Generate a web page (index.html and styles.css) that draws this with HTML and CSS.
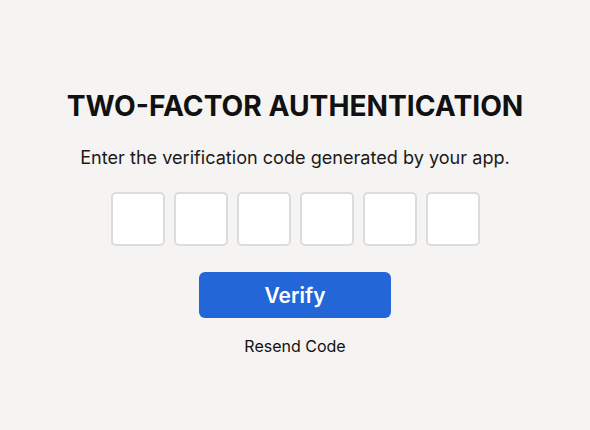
FILE: index.html
```html
<!DOCTYPE html>
<html lang="en">
<head>
    <meta charset="UTF-8">
    <meta name="viewport" content="width=device-width, initial-scale=1.0">
    <title>Two-Factor Authentication</title>
    <link rel="stylesheet" href="styles.css">
</head>
<body>
    <div id="auth-screen">
        <h1>TWO-FACTOR AUTHENTICATION</h1>
        <p>Enter the verification code generated by your app.</p>
        <div id="code-inputs">
            <input type="text" class="digit" maxlength="1">
            <input type="text" class="digit" maxlength="1">
            <input type="text" class="digit" maxlength="1">
            <input type="text" class="digit" maxlength="1">
            <input type="text" class="digit" maxlength="1">
            <input type="text" class="digit" maxlength="1">
        </div>
        <button class="verify-btn">Verify</button>
        <a class="resend" href="#">Resend Code</a>
    </div>
</body>
</html>
```

FILE: styles.css
```css
body, html {
    margin: 0;
    padding: 0;
    font-family: Inter, "Liberation Sans", Arial, sans-serif;
    height: 100%;
    background-color: #f5f4f2;
    color: #111;
}
#auth-screen {
    display: flex;
    flex-direction: column;
    align-items: center;
    padding-top: 89px;
}
#auth-screen h1 {
    font-size: 28.2px;
    font-weight: 700;
    margin: 0;
    line-height: 34px;
}
#auth-screen p {
    font-size: 18.1px;
    margin: 22px 0 0;
    line-height: 24px;
    color: #1a1a1a;
}
#code-inputs {
    display: flex;
    gap: 9px;
    margin-top: 23px;
}
.digit {
    width: 54px;
    height: 54px;
    box-sizing: border-box;
    border: 2px solid #dcdcdc;
    border-radius: 5px;
    background: #fff;
    margin: 0;
    padding: 0;
    text-align: center;
    font-size: 22px;
}
.verify-btn {
    margin-top: 26px;
    width: 192px;
    height: 46px;
    border: none;
    border-radius: 6px;
    background-color: #2366d8;
    color: #fff;
    font-family: inherit;
    font-size: 21px;
    font-weight: 600;
    cursor: pointer;
}
.resend {
    margin-top: 18px;
    font-size: 16px;
    color: #111;
    text-decoration: none;
    line-height: 20px;
}
```
